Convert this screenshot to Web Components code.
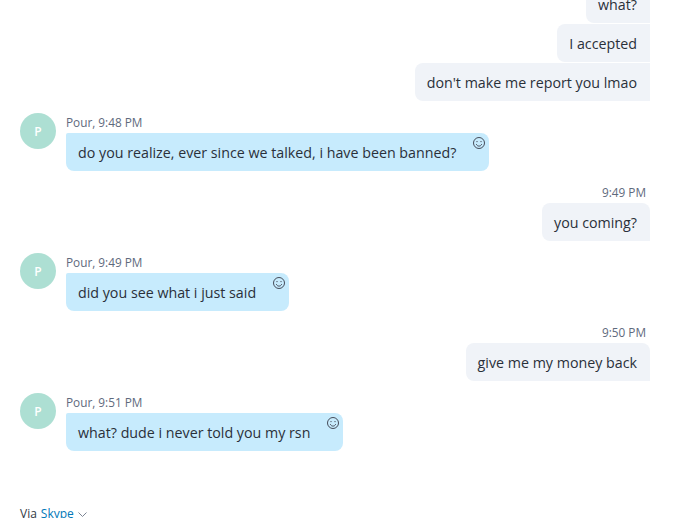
<!DOCTYPE html>
<html>
<head>
<meta charset="utf-8">
<style>
html, body { margin: 0; height: 518px; overflow: hidden; background: #fff; }
body { font-family: "Open Sans", "Noto Sans", sans-serif; }
</style>
</head>
<body>
<chat-thread>
  <sent-group>
    <chat-bubble kind="out" first>what?</chat-bubble>
    <chat-bubble kind="out">I accepted</chat-bubble>
    <chat-bubble kind="out">don't make me report you lmao</chat-bubble>
  </sent-group>
  <received-msg time="Pour, 9:48 PM" text="do you realize, ever since we talked, i have been banned?"></received-msg>
  <sent-group time="9:49 PM"><chat-bubble kind="out" top>you coming?</chat-bubble></sent-group>
  <received-msg time="Pour, 9:49 PM" text="did you see what i just said"></received-msg>
  <sent-group time="9:50 PM"><chat-bubble kind="out" top>give me my money back</chat-bubble></sent-group>
  <received-msg time="Pour, 9:51 PM" text="what? dude i never told you my rsn"></received-msg>
  <via-footer></via-footer>
</chat-thread>

<script>
class ChatThread extends HTMLElement {
    constructor() {
        super();
        this.attachShadow({mode: "open"}).innerHTML = `
            <style>
                :host { display: flex; flex-direction: column; margin-top: -15px; padding: 0 29px 0 20px; }
            </style>
            <slot></slot>`;
    }
}

class ChatBubble extends HTMLElement {
    constructor() {
        super();
        this.attachShadow({mode: "open"}).innerHTML = `
            <style>
                :host {
                    display: block;
                    box-sizing: border-box;
                    height: 38px;
                    padding: 0 13px 0 12px;
                    line-height: 40px;
                    font-size: 14.25px;
                    color: #2a303a;
                    white-space: nowrap;
                    position: relative;
                }
                :host([kind="out"]) { background: #f0f3f8; border-radius: 8px 0 0 8px; }
                :host([kind="out"][top]) { border-radius: 8px 8px 0 8px; }
                :host([kind="in"]) { background: #c7ebfd; border-radius: 2px 8px 8px 8px; padding-right: 33px; }
                ::slotted(svg) { position: absolute; top: 3px; right: 3px; }
            </style>
            <slot></slot>`;
    }
}

class SentGroup extends HTMLElement {
    constructor() {
        super();
        const time = this.getAttribute("time");
        this.attachShadow({mode: "open"}).innerHTML = `
            <style>
                :host { display: flex; flex-direction: column; align-items: flex-end; gap: 1px; margin-bottom: 12px; }
                .time { height: 20px; margin: 0 4px 0 0; line-height: 20px; font-size: 11.8px; color: #5f6a7d; }
            </style>
            ${time ? `<div class="time">${time}</div>` : ""}
            <slot></slot>`;
    }
}

class ReceivedMsg extends HTMLElement {
    constructor() {
        super();
        this.attachShadow({mode: "open"}).innerHTML = `
            <style>
                :host { display: flex; gap: 10px; margin-bottom: 11px; }
                .avatar {
                    width: 36px; height: 36px; border-radius: 50%;
                    background: #addfd3; color: #fff;
                    font-size: 12px; font-weight: 600;
                    display: flex; align-items: center; justify-content: center;
                }
                .body { display: flex; flex-direction: column; align-items: flex-start; }
                .time { height: 20px; line-height: 18px; font-size: 11.8px; color: #5f6a7d; }
            </style>
            <div class="avatar">P</div>
            <div class="body">
                <div class="time">${this.getAttribute("time")}</div>
                <chat-bubble kind="in">${this.getAttribute("text")}<svg width="14" height="14" viewBox="0 0 14 14" fill="none" stroke="#454c5a"><circle cx="7" cy="7" r="5.5"/><circle cx="5" cy="5.6" r=".7" fill="#454c5a" stroke="none"/><circle cx="9" cy="5.6" r=".7" fill="#454c5a" stroke="none"/><path d="M4.3 8.2c.6 1.3 1.6 1.9 2.7 1.9s2.1-.6 2.7-1.9"/></svg></chat-bubble>
            </div>`;
    }
}

class ViaFooter extends HTMLElement {
    constructor() {
        super();
        this.attachShadow({mode: "open"}).innerHTML = `
            <style>
                :host { display: flex; align-items: center; gap: 4px; margin-top: 44px; font-size: 12px; line-height: 16px; color: #333a45; }
                a { color: #0078b8; text-decoration: none; }
            </style>
            <span>Via</span> <a>Skype</a>
            <svg width="9" height="9" viewBox="0 0 9 9" fill="none" stroke="#7d8594"><path d="M.5 2.5l4 4 4-4"/></svg>`;
    }
}

customElements.define("chat-bubble", ChatBubble);
customElements.define("chat-thread", ChatThread);
customElements.define("sent-group", SentGroup);
customElements.define("received-msg", ReceivedMsg);
customElements.define("via-footer", ViaFooter);
</script>
</body>
</html>
